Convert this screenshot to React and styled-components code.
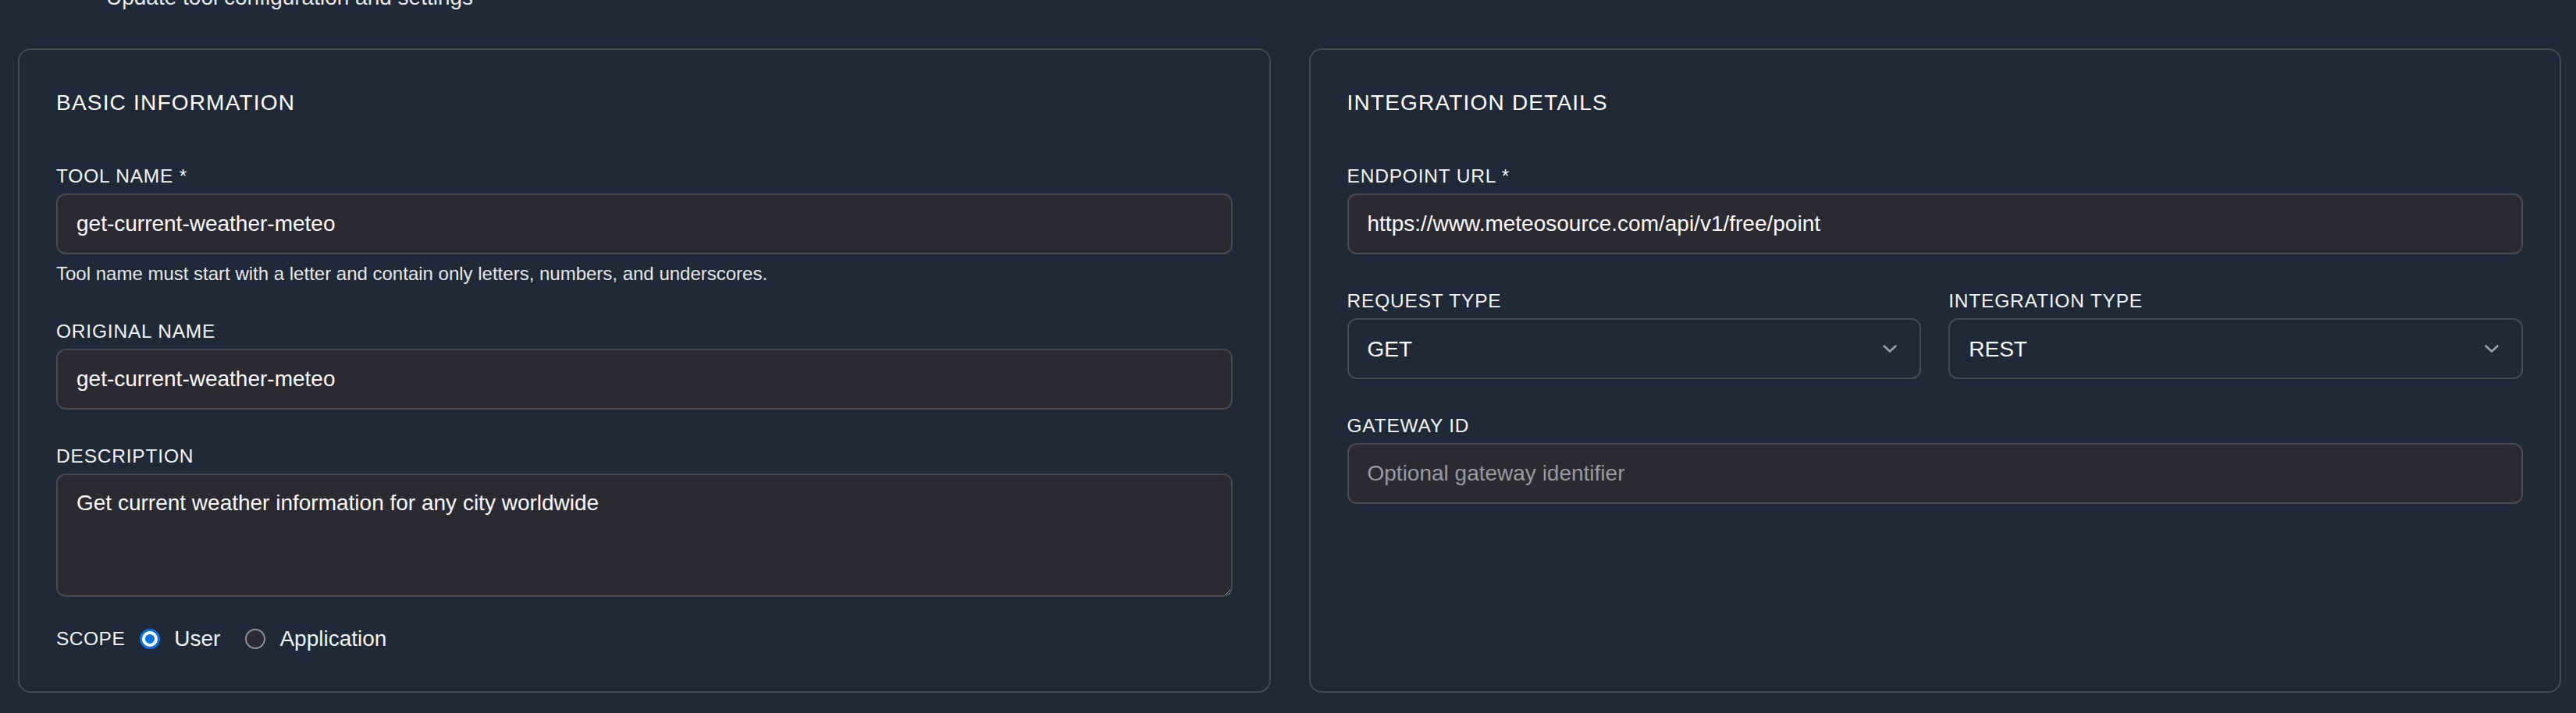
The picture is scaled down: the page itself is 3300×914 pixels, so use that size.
import React from 'react'
import styled, { createGlobalStyle } from 'styled-components'

const GlobalStyle = createGlobalStyle`
  html, body {
    margin: 0;
    padding: 0;
    background: #1f2937;
  }
  body {
    font-family: "Liberation Sans", Arial, sans-serif;
    color: #f3f4f6;
    overflow: hidden;
  }
  * { box-sizing: border-box; }
`

const Page = styled.div`
  padding: 0 19px 0 23px;
  margin-top: -24px;
`

const Subtitle = styled.p`
  margin: 0 0 44px 113px;
  font-size: 28px;
  line-height: 42px;
  color: #e5e7eb;
`

const Columns = styled.div`
  display: grid;
  grid-template-columns: 1fr 1fr;
  gap: 49px;
`

const Card = styled.section`
  border: 2px solid #4a4b50;
  border-radius: 16px;
  padding: 47px;
  display: flex;
  flex-direction: column;
`

const CardTitle = styled.h2`
  margin: 0 0 54px;
  font-size: 28px;
  line-height: 42px;
  font-weight: 400;
  letter-spacing: 1.2px;
  text-transform: uppercase;
  color: #fff;
`

const Field = styled.div`
  display: flex;
  flex-direction: column;
  margin-bottom: ${p => (p.$gap ?? 41)}px;
`

const Label = styled.label`
  font-size: 24.5px;
  line-height: 37px;
  letter-spacing: 0.8px;
  text-transform: uppercase;
  margin-bottom: 4px;
  color: #f3f4f6;
`

const Input = styled.input`
  width: 100%;
  height: 78px;
  padding: 0 24px;
  border: 2px solid #4a4b50;
  border-radius: 12px;
  background: #2b2a33;
  color: #fbfbfe;
  font-family: inherit;
  font-size: 28px;
  outline: none;

  &::placeholder {
    color: #9a9a9f;
  }
`

const TextArea = styled.textarea`
  display: block;
  width: 100%;
  height: 158px;
  padding: 15px 24px 13px;
  border: 2px solid #4a4b50;
  border-radius: 12px;
  background: #2b2a33;
  color: #fbfbfe;
  font-family: inherit;
  font-size: 28px;
  line-height: 42px;
  outline: none;
  color-scheme: dark;
`

const Helper = styled.p`
  margin: 8px 0 0;
  font-size: 24px;
  line-height: 33px;
  color: #e5e7eb;
`

const SelectRow = styled.div`
  display: grid;
  grid-template-columns: 1fr 1fr;
  gap: 35px;
  margin-bottom: 41px;
`

const SelectWrap = styled.div`
  position: relative;
`

const Select = styled.select`
  appearance: none;
  width: 100%;
  height: 78px;
  padding: 0 24px;
  border: 2px solid #4a4b50;
  border-radius: 12px;
  background: #1f2937;
  color: #fbfbfe;
  font-family: inherit;
  font-size: 28px;
  outline: none;
`

const Chevron = styled.svg`
  position: absolute;
  right: 31px;
  top: 50%;
  transform: translateY(-50%);
  pointer-events: none;
`

const ScopeRow = styled.div`
  display: flex;
  align-items: center;
  height: 40px;
`

const ScopeLabel = styled.span`
  font-size: 24.5px;
  letter-spacing: 0.5px;
  text-transform: uppercase;
  margin-right: 19px;
`

const RadioOption = styled.label`
  display: flex;
  align-items: center;
  gap: 18px;
  font-size: 28px;
  margin-right: 32px;
  color: #f3f4f6;
`

const Radio = styled.input`
  appearance: none;
  width: 26px;
  height: 26px;
  margin: 0;
  border-radius: 50%;
  border: 2px solid #8f8f9d;
  background: #2b2a33;

  &:checked {
    border: 3.5px solid #0b73e6;
    background: radial-gradient(circle, #0b73e6 0 5.5px, #fff 6.5px);
  }
`

const ChevronIcon = () => (
  <Chevron width="18" height="10" viewBox="0 0 18 10" fill="none">
    <path d="M1.5 1.5 L9 8.5 L16.5 1.5" stroke="#9ca3af" strokeWidth="2.4" strokeLinecap="round" strokeLinejoin="round" />
  </Chevron>
)

export default function App() {
  return (
    <>
      <GlobalStyle />
      <Page>
        <Subtitle>Update tool configuration and settings</Subtitle>
        <Columns>
          <Card>
            <CardTitle>Basic Information</CardTitle>

            <Field $gap={39}>
              <Label>Tool Name *</Label>
              <Input defaultValue="get-current-weather-meteo" />
              <Helper>Tool name must start with a letter and contain only letters, numbers, and underscores.</Helper>
            </Field>

            <Field>
              <Label>Original Name</Label>
              <Input defaultValue="get-current-weather-meteo" />
            </Field>

            <Field $gap={34}>
              <Label>Description</Label>
              <TextArea defaultValue="Get current weather information for any city worldwide" />
            </Field>

            <ScopeRow>
              <ScopeLabel>Scope</ScopeLabel>
              <RadioOption>
                <Radio type="radio" name="scope" defaultChecked />
                User
              </RadioOption>
              <RadioOption>
                <Radio type="radio" name="scope" />
                Application
              </RadioOption>
            </ScopeRow>
          </Card>

          <Card>
            <CardTitle>Integration Details</CardTitle>

            <Field>
              <Label>Endpoint URL *</Label>
              <Input defaultValue="https://www.meteosource.com/api/v1/free/point" />
            </Field>

            <SelectRow>
              <Field $gap={0}>
                <Label>Request Type</Label>
                <SelectWrap>
                  <Select defaultValue="GET">
                    <option>GET</option>
                    <option>POST</option>
                    <option>PUT</option>
                    <option>DELETE</option>
                  </Select>
                  <ChevronIcon />
                </SelectWrap>
              </Field>
              <Field $gap={0}>
                <Label>Integration Type</Label>
                <SelectWrap>
                  <Select defaultValue="REST">
                    <option>REST</option>
                    <option>MCP</option>
                  </Select>
                  <ChevronIcon />
                </SelectWrap>
              </Field>
            </SelectRow>

            <Field $gap={0}>
              <Label>Gateway ID</Label>
              <Input placeholder="Optional gateway identifier" />
            </Field>
          </Card>
        </Columns>
      </Page>
    </>
  )
}
